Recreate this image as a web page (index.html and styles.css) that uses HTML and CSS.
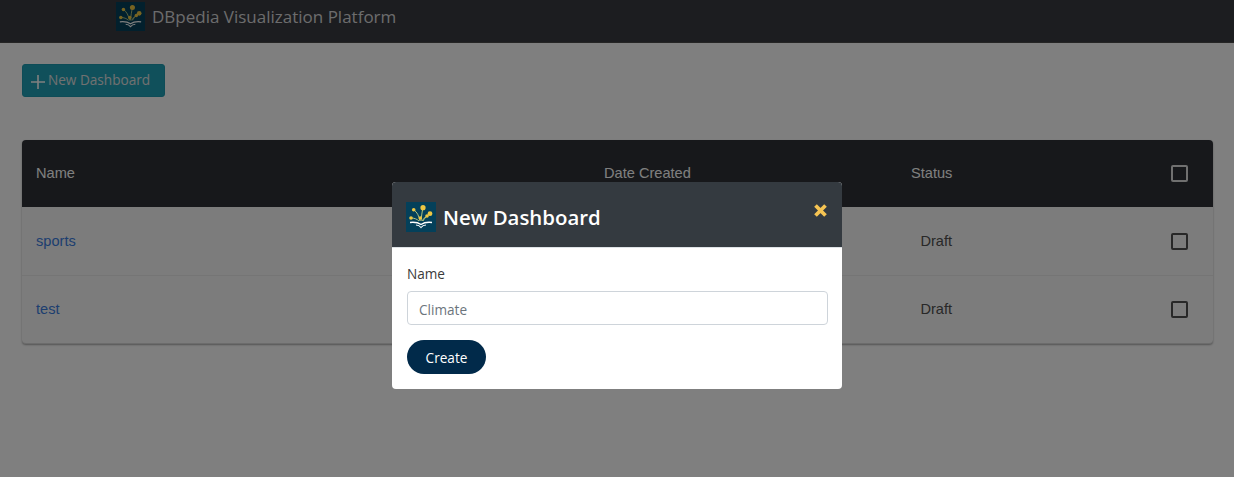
FILE: index.html
```html
<!DOCTYPE html>
<html lang="en">
<head>
<meta charset="utf-8">
<title>DBpedia Visualization Platform</title>
<link rel="stylesheet" href="styles.css">
</head>
<body>
<svg class="defs" width="0" height="0" aria-hidden="true">
  <symbol id="logo" viewBox="0 0 30 30">
    <rect width="30" height="30" fill="#04405a"/>
    <g stroke="#c4d084" stroke-width="0.9" fill="none">
      <path d="M15 19 C15.500 14 16 10 17 6"/>
      <path d="M14 19 C13 14 11 10 8 8"/>
      <path d="M16 19 C18 16 21 13 24 12"/>
      <path d="M13 19 C11 17 8 16 5 16"/>
      <path d="M17 19 C18 17 20 15 21 14"/>
    </g>
    <g fill="#eec643">
      <circle cx="17" cy="5.700" r="2.600"/>
      <circle cx="24" cy="11.700" r="2.400"/>
      <circle cx="7.700" cy="7.700" r="1.800"/>
      <circle cx="5" cy="16" r="1.800"/>
      <circle cx="14.300" cy="16" r="1.800"/>
      <circle cx="21" cy="14" r="1.800"/>
    </g>
    <path d="M4 20.500 C8 20 12 20.500 15 22.500 C18 20.500 22 20 26 20.500" stroke="#fff" stroke-width="1.400" fill="none"/>
    <path d="M10 23 C12 23 13.500 23.500 15 25.500 C16.500 23.500 18 23 20 23" stroke="#fff" stroke-width="1.200" fill="none"/>
  </symbol>
</svg>

<header class="navbar">
  <svg class="logo"><use href="#logo"/></svg>
  <span class="brand">DBpedia Visualization Platform</span>
</header>

<main class="page">
  <button class="btn-new" type="button">
    <svg class="plus" viewBox="0 0 14 14"><path d="M7 0V14M0 7H14"/></svg>
    <span class="btn-new-text">New Dashboard</span>
  </button>

  <section class="table">
    <div class="row head">
      <span>Name</span>
      <span>Date Created</span>
      <span class="status">Status</span>
      <span class="check"></span>
    </div>
    <div class="row">
      <a class="link">sports</a>
      <span></span>
      <span class="status">Draft</span>
      <span class="check"></span>
    </div>
    <div class="row">
      <a class="link">test</a>
      <span></span>
      <span class="status">Draft</span>
      <span class="check"></span>
    </div>
  </section>
</main>

<div class="backdrop"></div>

<div class="modal">
  <div class="modal-head">
    <svg class="modal-logo"><use href="#logo"/></svg>
    <h2>New Dashboard</h2>
    <svg class="close" viewBox="0 0 12 12"><path d="M2 2L10 10M10 2L2 10"/></svg>
  </div>
  <div class="modal-body">
    <label class="label">Name</label>
    <div class="input">Climate</div>
    <button class="btn-create" type="button">Create</button>
  </div>
</div>
</body>
</html>
```

FILE: styles.css
```css
* { box-sizing: border-box; }
html, body { margin: 0; height: 100%; }
body {
  height: 477px;
  overflow: hidden;
  background: #fff;
  font-family: "Open Sans", "Noto Sans", sans-serif;
}
.defs { position: absolute; }

.navbar {
  height: 43px;
  background: #383b40;
  display: flex;
  align-items: flex-start;
  padding: 2px 0 0 116px;
  gap: 7px;
  border-bottom: 1px solid #4a4a4a;
}
.logo { width: 29px; height: 29px; }
.brand {
  font-size: 17px;
  line-height: 30px;
  color: #d8d8da;
}

.page { padding: 21px 21px 0 22px; }

.btn-new {
  display: flex;
  align-items: center;
  gap: 3px;
  width: 143px;
  height: 33px;
  padding: 0 0 0 8px;
  background: #20a0b6;
  border: 1px solid #1c99ae;
  border-radius: 3px;
  color: #e2e2e2;
  font: 400 13.600px/1 "Open Sans", sans-serif;
}
.btn-new-text { margin-bottom: 2px; }
.plus { width: 14px; height: 14px; margin-top: 2px; }
.plus path { stroke: #fff; stroke-width: 1.600; fill: none; }

.table {
  margin-top: 43px;
  width: 1191px;
  border-radius: 4px;
  background: #f8f8f8;
  box-shadow: 0 1px 2px rgba(0, 0, 0, .35);
  border-bottom: 1px solid #d8d8d8;
  font-family: "Liberation Sans", Arial, sans-serif;
  font-size: 14.600px;
  color: #505050;
}
.row {
  display: grid;
  grid-template-columns: 568px 307px 41px 1fr;
  align-items: center;
  height: 69px;
  padding: 0 25px 0 14px;
  border-bottom: 1px solid #ebebeb;
}
.row:last-child { height: 67px; padding-bottom: 1px; border-bottom: 0; }
.head {
  height: 67px;
  padding-bottom: 1px;
  background: #2e3036;
  color: #fff;
  border-bottom: 0;
  border-radius: 4px 4px 0 0;
}
.status { text-align: right; white-space: nowrap; }
.link { color: #3b7de0; }
.check {
  justify-self: end;
  width: 17px;
  height: 17px;
  border: 2px solid #505050;
  border-radius: 2px;
}
.head .check { border-color: #e0e0e0; }

.backdrop {
  position: fixed;
  inset: 0;
  background: rgba(0, 0, 0, .5);
}

.modal {
  position: fixed;
  left: 392px;
  top: 182px;
  width: 450px;
  height: 207px;
  background: #fff;
  border-radius: 4px;
  overflow: hidden;
}
.modal-head {
  height: 66px;
  background: #343a40;
  display: flex;
  align-items: flex-start;
  padding: 20px 14px 0 14px;
  gap: 7px;
  border-bottom: 1px solid #dee2e6;
}
.modal-logo { width: 30px; height: 30px; }
.modal-head h2 {
  margin: 0;
  flex: 1;
  font-size: 20.400px;
  line-height: 31px;
  font-weight: 600;
  color: #fff;
}
.close { width: 15px; height: 15px; margin-top: 1px; }
.close path { stroke: #f6c453; stroke-width: 3; fill: none; }

.modal-body {
  display: flex;
  flex-direction: column;
  align-items: flex-start;
  padding: 16px 14px 0 15px;
}
.label {
  font-size: 13.600px;
  line-height: 20px;
  color: #3a3a3a;
}
.input {
  margin-top: 7px;
  width: 421px;
  height: 34px;
  padding: 0 11px;
  border: 1px solid #ced4da;
  border-radius: 4px;
  font-size: 13.600px;
  line-height: 36px;
  color: #6c757d;
}
.btn-create {
  margin-top: 15px;
  width: 79px;
  height: 34px;
  padding: 1px 0 0;
  border: 0;
  border-radius: 17px;
  background: #012a4a;
  color: #fff;
  font: 400 13.600px/1 "Open Sans", sans-serif;
}
```
